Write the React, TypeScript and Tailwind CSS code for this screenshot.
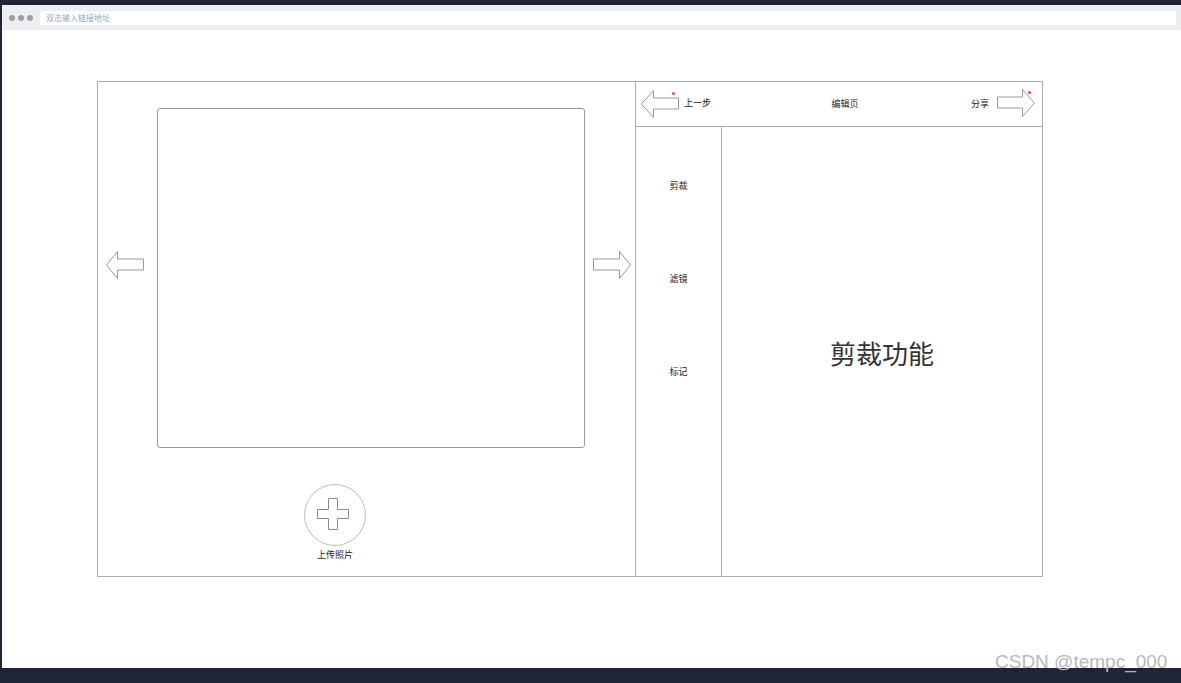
import React from "react"

const cjk = { fontFamily: '"Noto Sans CJK SC", "Noto Sans", sans-serif' }

function LeftArrow({ head = 11 }: { head?: number }) {
    // outlined block arrow pointing left
    return (
        <svg width="38" height="28" viewBox="0 0 38 28" className="block">
            <path
                d={`M0.5 14 L${head + 0.5} 0.5 L${head + 0.5} 8 L37.5 8 L37.5 19 L${head + 0.5} 19 L${head + 0.5} 27.5 Z`}
                fill="white"
                stroke="#9a9a9a"
                strokeWidth="1"
            />
        </svg>
    )
}

function RightArrow({ head = 11 }: { head?: number }) {
    return (
        <svg width="38" height="28" viewBox="0 0 38 28" className="block">
            <path
                d={`M37.5 14 L${37.5 - head} 0.5 L${37.5 - head} 8 L0.5 8 L0.5 19 L${37.5 - head} 19 L${37.5 - head} 27.5 Z`}
                fill="white"
                stroke="#9a9a9a"
                strokeWidth="1"
            />
        </svg>
    )
}

function PlusIcon() {
    return (
        <svg width="32" height="32" viewBox="0 0 32 32" className="block">
            <path
                d="M11.5 0.5 H20.5 V11.5 H31.5 V20.5 H20.5 V31.5 H11.5 V20.5 H0.5 V11.5 H11.5 Z"
                fill="white"
                stroke="#8a8a8a"
                strokeWidth="1"
            />
        </svg>
    )
}

export default function App() {
    return (
        <div className="relative flex h-[683px] w-[1181px] flex-col overflow-hidden bg-[#1f2534]" style={cjk}>
            <div className="h-[5px] shrink-0" />
            <div className="ml-[2px] flex h-[663px] flex-col bg-white">
                {/* browser bar */}
                <div className="flex h-[25px] shrink-0 items-center bg-[#eceef2] pl-[7px] pr-[5px]">
                    <div className="flex gap-[3px]">
                        <span className="h-[6px] w-[6px] rounded-full bg-[#a0a0a0]" />
                        <span className="h-[6px] w-[6px] rounded-full bg-[#a0a0a0]" />
                        <span className="h-[6px] w-[6px] rounded-full bg-[#a0a0a0]" />
                    </div>
                    <div className="ml-[7px] flex h-[14px] flex-1 items-center bg-white pl-[6px] text-[8px] text-[#9aa3c8]">
                        双击输入链接地址
                    </div>
                </div>

                {/* wireframe */}
                <div className="ml-[95px] mt-[51px] flex h-[496px] w-[946px] border border-[#ababab]">
                    {/* left: photo viewer */}
                    <div className="flex w-[538px] shrink-0 flex-col border-r border-[#ababab] pt-[26px]">
                        <div className="flex pl-[8px]">
                            <div className="mt-[143px]">
                                <LeftArrow />
                            </div>
                            <div className="ml-[13px] h-[340px] w-[428px] rounded-[3px] border border-[#9a9a9a]" />
                            <div className="ml-[8px] mt-[143px]">
                                <RightArrow />
                            </div>
                        </div>
                        <div className="ml-[206px] mt-[36px] flex w-[62px] flex-col items-center">
                            <div className="flex h-[62px] w-[62px] items-center justify-center rounded-full border border-[#bdbdbd]">
                                <div className="mr-[4px] mt-[-2px]">
                                    <PlusIcon />
                                </div>
                            </div>
                            <div className="mt-[3px] whitespace-nowrap text-[9px] leading-[12px] text-[#222]">上传照片</div>
                        </div>
                    </div>

                    {/* right: editor */}
                    <div className="flex flex-1 flex-col">
                        <div className="flex h-[45px] shrink-0 items-center border-b border-[#ababab] pl-[5px] pr-[7px]">
                            <div className="relative">
                                <LeftArrow head={12} />
                                <span className="absolute left-[31px] top-[2px] h-[3px] w-[3px] rounded-full bg-[#ff3b5c]" />
                            </div>
                            <span className="ml-[5px] mt-[-3px] text-[9px] text-[#222]">上一步</span>
                            <span className="flex-1 pl-[8px] text-center text-[9px] text-[#222]">编辑页</span>
                            <span className="text-[9px] text-[#222]">分享</span>
                            <div className="relative ml-[8px] mt-[-3px]">
                                <RightArrow head={12} />
                                <span className="absolute left-[31px] top-[2px] h-[3px] w-[3px] rounded-full bg-[#ff3b5c]" />
                            </div>
                        </div>
                        <div className="flex flex-1">
                            <div className="flex w-[86px] shrink-0 flex-col items-center gap-[79px] border-r border-[#ababab] pt-[52px] text-[9px] leading-[14px] text-[#222]">
                                <span>剪裁</span>
                                <span>滤镜</span>
                                <span>标记</span>
                            </div>
                            <div className="flex flex-1 items-center justify-center">
                                <span className="mt-[2px] text-[26px] text-[#333]">剪裁功能</span>
                            </div>
                        </div>
                    </div>
                </div>
            </div>

            <div
                className="absolute left-[995px] top-[651px] text-[19px] leading-[22px] text-[#b8b8b8]"
                style={{ fontFamily: '"Liberation Sans", Arial, sans-serif' }}
            >
                CSDN @tempc_000
            </div>
        </div>
    )
}
